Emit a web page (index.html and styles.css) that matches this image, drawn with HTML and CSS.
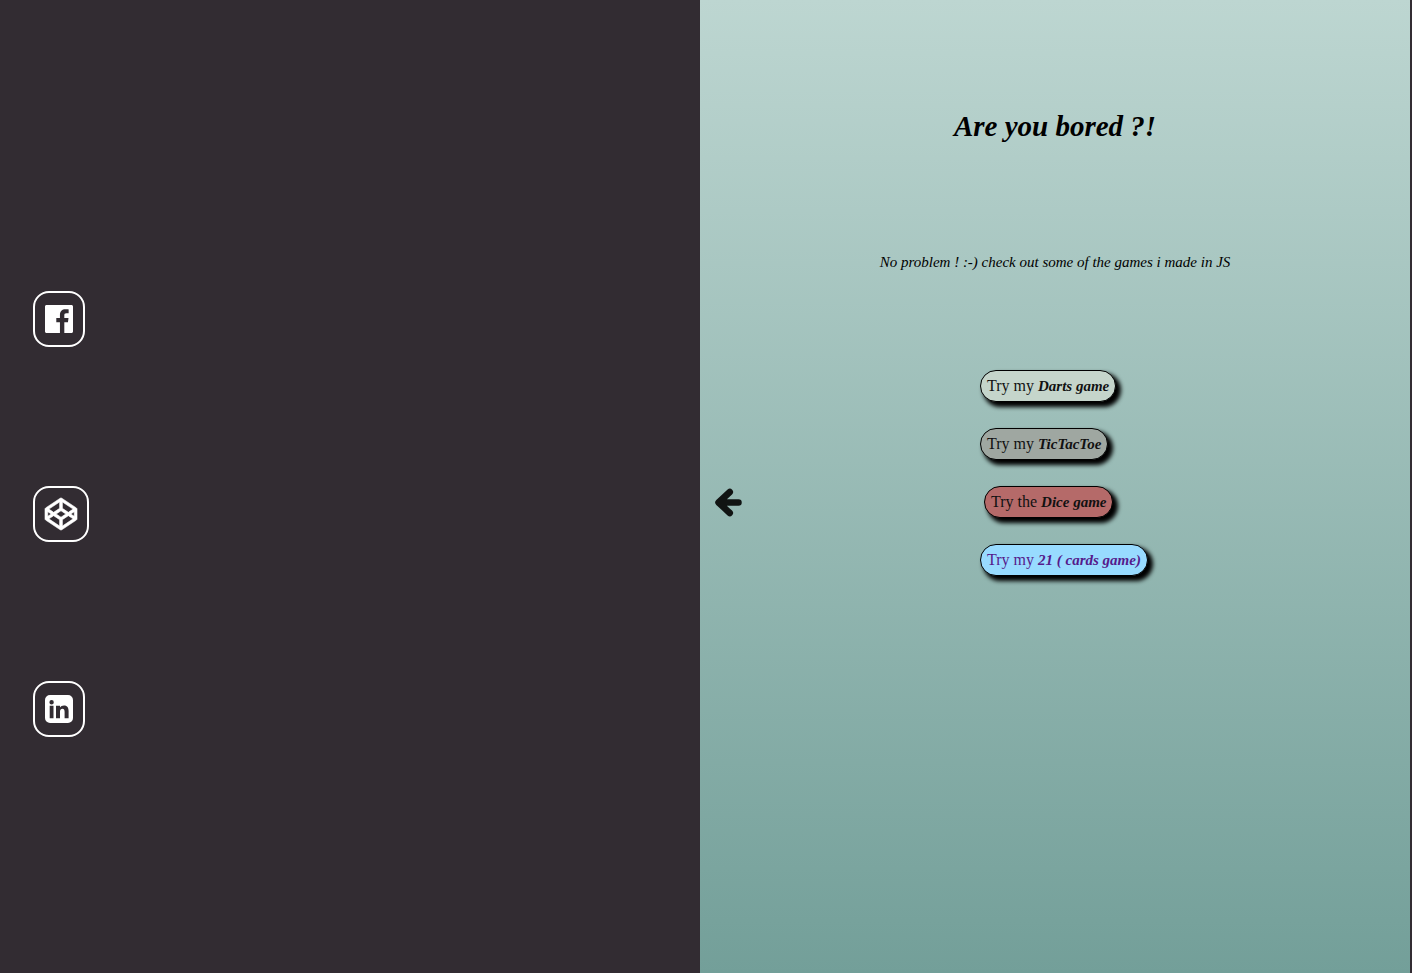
FILE: index.html
```html
<!DOCTYPE html>
<html lang="en">
<head>
<meta charset="utf-8">
<meta name="viewport" content="width=device-width, initial-scale=1">
<title>Are you bored ?!</title>
<link rel="stylesheet" href="styles.css">
</head>
<body>
<div class="page">
  <nav class="social" aria-label="Social links">
    <a class="social-link" href="#" aria-label="Facebook">
      <svg width="28" height="32" viewBox="0 0 448 512"><path d="M448 56.7v398.5c0 13.700-11.100 24.700-24.700 24.700H309.100V306.500h58.200l8.700-67.600h-67v-43.200c0-19.600 5.400-32.900 33.500-32.900h35.800v-60.500c-6.200-.8-27.400-2.700-52.200-2.700-51.600 0-87 31.500-87 89.400v49.900h-58.400v67.600h58.400V480H24.700C11.100 480 0 468.900 0 455.300V56.700C0 43.100 11.100 32 24.700 32h398.500c13.700 0 24.800 11.100 24.800 24.700z"/></svg>
    </a>
    <a class="social-link" href="#" aria-label="CodePen">
      <svg class="codepen" width="32" height="32" viewBox="0 0 512 512"><path d="M502.285 159.704l-234-156c-7.987-4.915-16.511-4.960-24.571 0l-234 156C3.714 163.703 0 170.847 0 177.989v155.999c0 7.143 3.714 14.286 9.715 18.286l234 156.022c7.987 4.915 16.511 4.960 24.571 0l234-156.022c6-3.999 9.715-11.143 9.715-18.286V177.989c-.001-7.142-3.715-14.286-9.716-18.285zM278 63.131l172.286 114.858-76.857 51.429L278 165.703V63.131zm-44 0v102.572l-95.429 63.715-76.857-51.429L234 63.131zM44 219.132l55.143 36.857L44 292.847v-73.715zm190 229.715L61.714 333.989l76.857-51.429L234 346.275v102.572zm22-140.858l-77.715-52 77.715-52 77.715 52-77.715 52zm22 140.858V346.275l95.429-63.715 76.857 51.429L278 448.847zm190-156l-55.143-36.857L468 219.132v73.715z"/></svg>
    </a>
    <a class="social-link" href="#" aria-label="LinkedIn">
      <svg width="28" height="32" viewBox="0 0 28 32"><path fill-rule="evenodd" d="M5 2h18A5 5 0 0 1 28 7v18A5 5 0 0 1 23 30H5A5 5 0 0 1 0 25V7A5 5 0 0 1 5 2zM4.700 12.800v12.400h3.800V12.800zM6.600 7a2.200 2.200 0 1 0 0 4.400 2.200 2.200 0 0 0 0-4.400zM11 12.800v12.400h4v-6.400c0-1.900.9-3 2.400-3 1.500 0 2.200 1.100 2.200 3v6.400h4v-7.200c0-3.800-1.900-5.500-4.600-5.500-1.900 0-3.200.9-4 2.100v-1.800z"/></svg>
    </a>
  </nav>
  <main class="panel">
    <a class="back" href="#" aria-label="Back">
      <svg width="28" height="30" viewBox="0 0 28 30"><path d="M15.800 4L4.500 14.500l11.300 10.500M5 14.500h19.500" fill="none" stroke="#111413" stroke-width="6.500" stroke-linecap="round" stroke-linejoin="round"/></svg>
    </a>
    <div class="content">
      <h1 class="title">Are you bored ?!</h1>
      <p class="intro">No problem ! :-) check out some of the games i made in JS</p>
      <ul class="games">
        <li><a class="pill darts" href="#">Try my <strong>Darts game</strong></a></li>
        <li><a class="pill tictactoe" href="#">Try my <strong>TicTacToe</strong></a></li>
        <li><a class="pill dice" href="#">Try the <strong>Dice game</strong></a></li>
        <li><a class="pill cards" href="#">Try my <strong>21 ( cards game)</strong></a></li>
      </ul>
    </div>
  </main>
</div>
</body>
</html>
```
FILE: styles.css
```css
* {
  box-sizing: border-box;
}

body {
  margin: 0;
  background: #322c32;
  font-family: "Liberation Serif", serif;
}

.page {
  display: grid;
  grid-template-columns: 70fr 71fr;
  min-height: 100vh;
  padding-right: 2px;
}

.social {
  display: flex;
  flex-direction: column;
  justify-content: center;
  align-items: flex-start;
  gap: 139px;
  padding: 55px 33px 0;
}

.social-link {
  display: flex;
  padding: 10px;
  border: 2px solid #fff;
  border-radius: 16px;
}

.social-link svg {
  fill: #fff;
}

.social-link .codepen {
  stroke: #fff;
  stroke-width: 10;
  overflow: visible;
}

.panel {
  position: relative;
  background: linear-gradient(#bdd6d1, #739f99);
}

.back {
  position: absolute;
  left: 14px;
  top: calc(50% + 1px);
  display: flex;
}

.content {
  display: flex;
  flex-direction: column;
  align-items: center;
  padding-top: 106px;
  color: #000;
}

.title {
  margin: 0;
  font-size: 29px;
  line-height: 40px;
  font-style: italic;
}

.intro {
  margin: 106px 0 0;
  font-size: 15px;
  line-height: 20px;
  font-style: italic;
}

.games {
  display: flex;
  flex-direction: column;
  gap: 26px;
  width: 150px;
  margin: 98px 0 0;
  padding: 0;
  list-style: none;
}

.games li {
  display: flex;
}

.pill {
  padding: 5px 6px;
  border: 1px solid #000;
  border-radius: 16px;
  box-shadow: 4px 4px 4px 1px #000;
  color: #111;
  font-size: 16px;
  line-height: 20px;
  white-space: nowrap;
  text-decoration: none;
}

.pill strong {
  font-size: 15px;
  font-style: italic;
}

.darts {
  background: #c5d5cb;
}

.tictactoe {
  background: #9fa7a1;
}

.dice {
  margin-left: 4px;
  background: #b56a69;
}

.cards {
  background: #98dbff;
  color: #551a8b;
}
```
